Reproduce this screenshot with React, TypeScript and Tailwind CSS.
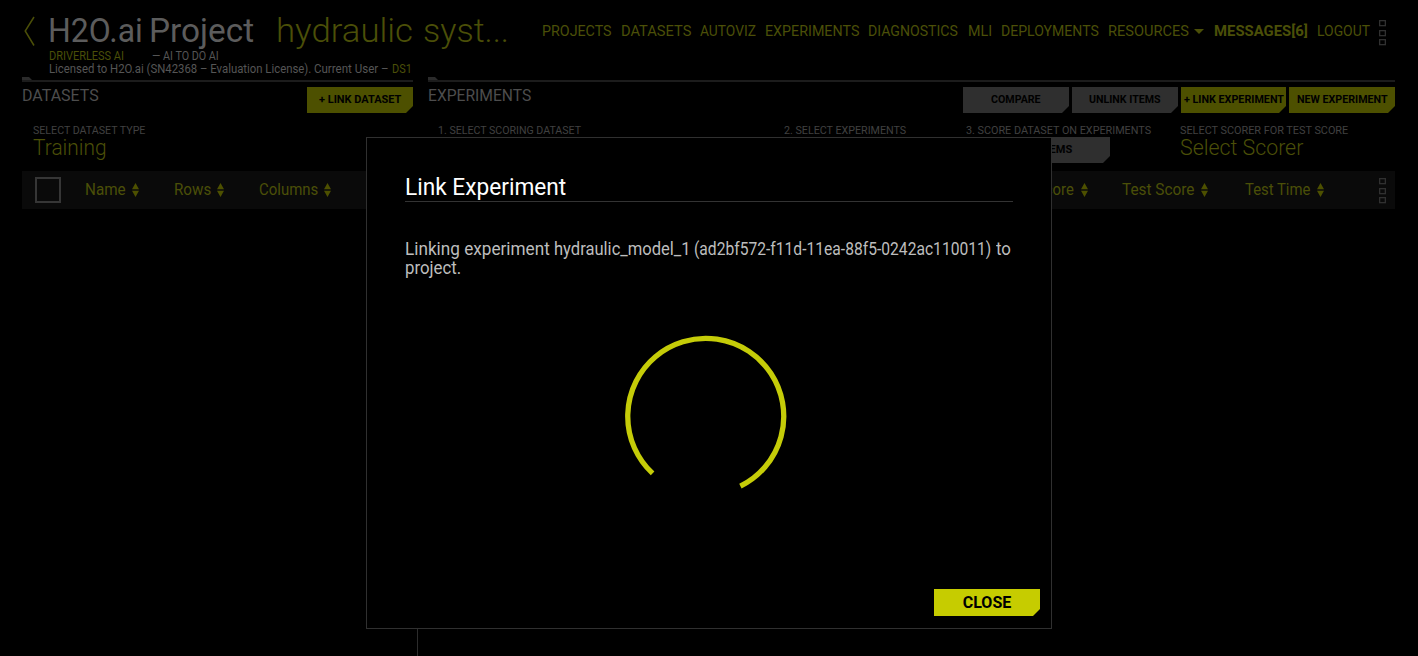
import React, { useLayoutEffect, useRef, useState } from "react";

/** Single line of text condensed or expanded to fill the width of its box. */
function Fit({ className = "", children }: { className?: string; children: React.ReactNode }) {
  const box = useRef<HTMLSpanElement>(null);
  const text = useRef<HTMLSpanElement>(null);
  const [scale, setScale] = useState(1);
  useLayoutEffect(() => {
    if (box.current && text.current) {
      setScale(box.current.clientWidth / text.current.offsetWidth);
    }
  }, [children]);
  return (
    <span ref={box} className={`block shrink-0 ${className}`}>
      <span
        ref={text}
        className="inline-block origin-left align-top whitespace-pre"
        style={{ transform: `scaleX(${scale})` }}
      >
        {children}
      </span>
    </span>
  );
}

function Squares() {
  return (
    <svg className="h-[26px] w-[7px] shrink-0" viewBox="0 0 7 26" fill="none" stroke="#303030" strokeWidth="1.3">
      <rect x="0.65" y="0.65" width="5.7" height="5" />
      <rect x="0.65" y="10.65" width="5.7" height="5" />
      <rect x="0.65" y="19.65" width="5.7" height="5" />
    </svg>
  );
}

function SortIcon({ className }: { className: string }) {
  return (
    <svg className={`h-[14px] w-[7px] shrink-0 ${className}`} viewBox="0 0 7 14" fill="#4d5000">
      <path d="M3.5 0 7 6.2H0Z M0 7.8H7L3.5 14Z" />
    </svg>
  );
}

function Button({
  tone,
  className = "",
  textClass,
  children,
}: {
  tone: "lime" | "gray";
  className?: string;
  textClass: string;
  children: React.ReactNode;
}) {
  return (
    <button
      className={`flex h-[26px] w-[106px] shrink-0 items-start justify-center text-[11.5px] leading-[25px] font-bold text-black [clip-path:polygon(0_0,100%_0,100%_calc(100%-7px),calc(100%-7px)_100%,0_100%)] ${
        tone === "lime" ? "bg-[#4d5000]" : "bg-[#2f2f2f]"
      } ${className}`}
    >
      <Fit className={textClass}>{children}</Fit>
    </button>
  );
}

function PanelRule() {
  return (
    <div className="h-[5px]">
      <div className="h-[3px] w-[10px] bg-[#2b2b2b] [clip-path:polygon(0_0,70%_0,100%_100%,0_100%)]" />
      <div className="h-[2px] bg-[#1c1c1c]" />
    </div>
  );
}

function Header() {
  return (
    <header className="flex h-[77px] pl-[24px] text-[#4b4f08]">
      <svg className="mt-[16px] h-[30px] w-[11px] shrink-0" viewBox="0 0 11 30" fill="none" stroke="#4b4f08" strokeWidth="1.5">
        <path d="M10 1 1.2 15 10 29.5" />
      </svg>
      <div className="w-[507px] shrink-0 pt-[11px] pl-[13px]">
        <div className="flex text-[34px] leading-[39px]">
          <Fit className="w-[95px] text-[#5c5c5c]">H2O.ai</Fit>
          <Fit className="ml-[6px] w-[105px] text-[#5c5c5c]">Project</Fit>
          <Fit className="ml-[22px] w-[137px] font-light">hydraulic</Fit>
          <Fit className="ml-[10px] w-[86px] font-light">syst...</Fit>
        </div>
        <div className="flex pl-px text-[12px] leading-[12px]">
          <Fit className="w-[75px]">DRIVERLESS AI</Fit>
          <Fit className="ml-[28px] w-[67px] text-[#555]">— AI TO DO AI</Fit>
        </div>
        <div className="flex pl-px text-[12px] leading-[15px]">
          <Fit className="w-[262px] text-[#555]">Licensed to H2O.ai (SN42368 – Evaluation License).</Fit>
          <Fit className="ml-[3px] w-[75px] text-[#555]">Current User –</Fit>
          <Fit className="ml-[3px] w-[20px]">DS1</Fit>
        </div>
      </div>
      <nav className="flex pt-[20px] text-[15.5px] leading-[22px]">
        <Fit className="w-[70px]">PROJECTS</Fit>
        <Fit className="ml-[9px] w-[70px]">DATASETS</Fit>
        <Fit className="ml-[9px] w-[56px]">AUTOVIZ</Fit>
        <Fit className="ml-[9px] w-[94px]">EXPERIMENTS</Fit>
        <Fit className="ml-[9px] w-[90px]">DIAGNOSTICS</Fit>
        <Fit className="ml-[10px] w-[24px]">MLI</Fit>
        <Fit className="ml-[9px] w-[98px]">DEPLOYMENTS</Fit>
        <Fit className="ml-[9px] w-[81px]">RESOURCES</Fit>
        <svg className="mt-[9px] ml-[5px] h-[5px] w-[10px]" viewBox="0 0 10 5" fill="#4b4f08">
          <path d="M0 0H10L5 5Z" />
        </svg>
        <Fit className="ml-[10px] w-[94px] font-bold">MESSAGES[6]</Fit>
        <Fit className="ml-[9px] w-[53px]">LOGOUT</Fit>
        <div className="ml-[9px]">
          <Squares />
        </div>
      </nav>
    </header>
  );
}

function DatasetsPanel() {
  return (
    <section className="w-[391px] shrink-0">
      <PanelRule />
      <div className="flex h-[40px] justify-between pt-[5px]">
        <Fit className="w-[77px] text-[17px] leading-[17px] text-[#4d4d4d]">DATASETS</Fit>
        <Button tone="lime" textClass="w-[82px]">+ LINK DATASET</Button>
      </div>
      <div className="flex h-[49px] flex-col pt-[2px] pl-[11px]">
        <Fit className="w-[112px] text-[11.5px] leading-[13px] text-[#404040]">SELECT DATASET TYPE</Fit>
        <Fit className="w-[74px] text-[21.5px] leading-[22px] font-light text-[#4b4f08]">Training</Fit>
      </div>
      <div className="flex h-[38px] bg-[#0a0a0a] pl-[13px] text-[16px] leading-[37px] text-[#4b4f08]">
        <div className="mt-[6px] h-[26px] w-[26px] shrink-0 border-2 border-[#363636]" />
        <Fit className="ml-[24px] w-[41px]">Name</Fit>
        <SortIcon className="mt-[12px] ml-[6px]" />
        <Fit className="ml-[35px] w-[37px]">Rows</Fit>
        <SortIcon className="mt-[12px] ml-[6px]" />
        <Fit className="ml-[35px] w-[59px]">Columns</Fit>
        <SortIcon className="mt-[12px] ml-[6px]" />
      </div>
    </section>
  );
}

function ExperimentsPanel() {
  return (
    <section className="w-[967px] shrink-0">
      <PanelRule />
      <div className="flex h-[40px] pt-[5px]">
        <Fit className="w-[103px] text-[17px] leading-[17px] text-[#4d4d4d]">EXPERIMENTS</Fit>
        <div className="ml-auto flex gap-[3px]">
          <Button tone="gray" textClass="w-[50px]">COMPARE</Button>
          <Button tone="gray" textClass="w-[72px]">UNLINK ITEMS</Button>
          <Button tone="lime" className="w-[105px]!" textClass="w-[100px]">+ LINK EXPERIMENT</Button>
          <Button tone="lime" textClass="w-[91px]">NEW EXPERIMENT</Button>
        </div>
      </div>
      <div className="flex h-[49px] pt-[2px] pl-[10px] text-[11.5px] leading-[13px] text-[#404040]">
        <Fit className="w-[143px]">1. SELECT SCORING DATASET</Fit>
        <Fit className="ml-[203px] w-[122px]">2. SELECT EXPERIMENTS</Fit>
        <div className="ml-[60px] w-[186px]">
          <Fit className="w-[185px]">3. SCORE DATASET ON EXPERIMENTS</Fit>
          <Button tone="gray" className="ml-[-3px] w-[147px]!" textClass="w-[70px]">SCORE ITEMS</Button>
        </div>
        <div className="ml-[28px]">
          <Fit className="w-[168px]">SELECT SCORER FOR TEST SCORE</Fit>
          <Fit className="w-[123px] text-[21.5px] leading-[22px] font-light text-[#4b4f08]">Select Scorer</Fit>
        </div>
      </div>
      <div className="flex h-[38px] justify-end bg-[#0a0a0a] pr-[9px] text-[16px] leading-[37px] text-[#4b4f08]">
        <Fit className="w-[38px]">Score</Fit>
        <SortIcon className="mt-[12px] ml-[7px]" />
        <Fit className="ml-[34px] w-[72px]">Test Score</Fit>
        <SortIcon className="mt-[12px] ml-[7px]" />
        <Fit className="ml-[37px] w-[65px]">Test Time</Fit>
        <SortIcon className="mt-[12px] ml-[7px]" />
        <div className="mt-[7px] ml-[55px]">
          <Squares />
        </div>
      </div>
    </section>
  );
}

function LinkDialog() {
  return (
    <div
      role="dialog"
      className="absolute top-[137px] left-[366px] flex h-[492px] w-[686px] flex-col border border-[#303030] bg-black"
    >
      <div className="mx-[38px] mt-[32px] h-[32px] border-b border-[#333]">
        <Fit className="w-[161px] text-[24.5px] leading-[34px] text-white">Link Experiment</Fit>
      </div>
      <div className="mt-[37px] ml-[38px] text-[18px] leading-[19px] text-[#bdbdbd]">
        <div className="flex">
          <Fit className="w-[145px]">Linking experiment</Fit>
          <Fit className="ml-[4px] w-[137px]">hydraulic_model_1</Fit>
          <Fit className="ml-[3px] w-[297px]">(ad2bf572-f11d-11ea-88f5-0242ac110011)</Fit>
          <Fit className="ml-[5px] w-[15px]">to</Fit>
        </div>
        <Fit className="w-[56px]">project.</Fit>
      </div>
      <svg className="mt-[57px] ml-[258px] h-[163px] w-[162px]" viewBox="0 0 162 163" fill="none" stroke="#c5cc08" strokeWidth="5.3">
        <path d="M27.6 139.4A78 78 0 1 1 115.4 152.2" />
      </svg>
      <Button
        tone="lime"
        className="mt-auto mr-[11px] mb-[12px] h-[27px]! self-end bg-[#c6cc00]! text-[16px]! leading-[27px]!"
        textClass="w-[49px]"
      >
        CLOSE
      </Button>
    </div>
  );
}

export default function App() {
  return (
    <main className="relative flex h-[656px] w-[1418px] flex-col overflow-hidden bg-black font-['Roboto',sans-serif]">
      <Header />
      <div className="flex gap-[15px] pl-[22px]">
        <DatasetsPanel />
        <ExperimentsPanel />
      </div>
      <div className="ml-[417px] w-px grow bg-[#2c2c2c]" />
      <LinkDialog />
    </main>
  );
}
